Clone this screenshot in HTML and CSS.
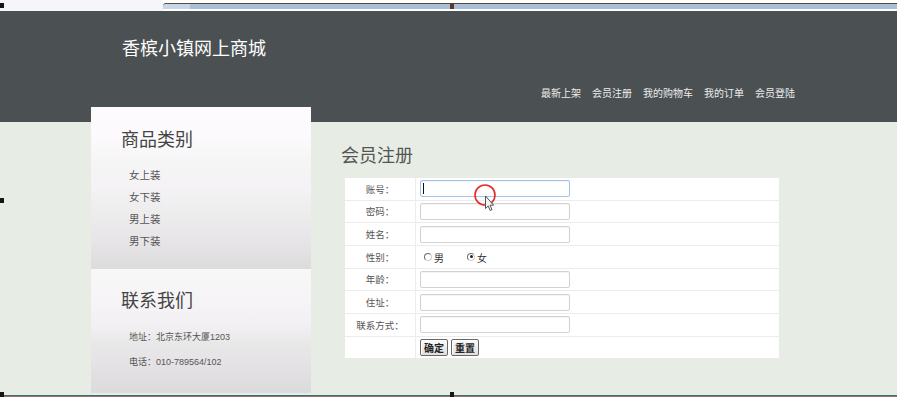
FILE: index.html
```html
<!DOCTYPE html>
<html lang="zh-CN">
<head>
<meta charset="utf-8">
<title>香槟小镇网上商城 - 会员注册</title>
<link rel="stylesheet" href="styles.css">
</head>
<body>
<div class="topbar"><div class="tb-left"></div><div class="tb-right"><div class="tb-thumb"></div></div></div>
<header class="header">
  <div class="wrap">
    <h1 class="logo">香槟小镇网上商城</h1>
    <nav class="nav">
      <a>最新上架</a><a>会员注册</a><a>我的购物车</a><a>我的订单</a><a>会员登陆</a>
    </nav>
  </div>
</header>
<div class="content">
  <div class="wrap row">
    <aside class="sidebar">
      <section class="panel cat">
        <h2 class="ph">商品类别</h2>
        <ul class="list">
          <li>女上装</li><li>女下装</li><li>男上装</li><li>男下装</li>
        </ul>
      </section>
      <section class="panel contact">
        <h2 class="ph">联系我们</h2>
        <div class="info">
          <p>地址：北京东环大厦1203</p>
          <p>电话：010-789564/102</p>
        </div>
      </section>
    </aside>
    <main class="main">
      <h2 class="title">会员注册</h2>
      <div class="form">
        <div class="lab">账号：</div><div class="val"><span class="field focus"><input class="inp" type="text"><span class="caret"></span></span></div>
        <div class="lab">密码：</div><div class="val"><input class="inp" type="password"></div>
        <div class="lab">姓名：</div><div class="val"><input class="inp" type="text"></div>
        <div class="lab">性别：</div><div class="val"><span class="radio"></span><span class="rtxt">男</span><span class="radio on"></span><span class="rtxt">女</span></div>
        <div class="lab">年龄：</div><div class="val"><input class="inp" type="text"></div>
        <div class="lab">住址：</div><div class="val"><input class="inp" type="text"></div>
        <div class="lab">联系方式：</div><div class="val"><input class="inp" type="text"></div>
        <div class="lab"></div><div class="val"><span class="btn">确定</span><span class="btn">重置</span></div>
      </div>
    </main>
  </div>
</div>
<div class="bottomline"></div>

<span class="handle h1"></span><span class="handle h2"></span><span class="handle h3"></span><span class="handle h4"></span><span class="handle h5"></span>

<svg class="cursor" width="24" height="36" viewBox="0 0 24 36">
  <circle cx="11" cy="11" r="10" fill="none" stroke="#e8282a" stroke-width="1.6"/>
  <path d="M11.5 12 L11.5 24.5 L14.2 22 L16.2 26.5 L18 25.7 L16 21.2 L19.6 21.2 Z" fill="#f4f4f4" stroke="#444" stroke-width="0.9" stroke-linejoin="round"/>
</svg>
</body>
</html>
```
FILE: styles.css
```css
html, body {
  margin: 0;
  padding: 0;
}
body {
  width: 897px;
  height: 405px;
  overflow: hidden;
  position: relative;
  background: #ffffff;
  font-family: "Liberation Sans", "Noto Sans CJK SC", sans-serif;
}

/* top strip (screenshot chrome) */
.topbar {
  display: flex;
  height: 11px;
}
.tb-left {
  width: 163px;
  background: #f5f5fa;
}
.tb-right {
  flex: 1;
  margin-top: 3px;
  height: 5px;
  border-top: 1px solid #5b4b3d;
  border-bottom: 2px solid #ffffff;
  background: #a8bfd9;
  border-top-left-radius: 3px;
}
.tb-thumb {
  width: 27px;
  height: 100%;
  background: #c7d6e8;
  border-top-left-radius: 3px;
}

/* header */
.header {
  height: 111px;
  background: #4b5153;
}
.wrap {
  width: 715px;
  margin: 0 auto;
}
.logo {
  margin: 0;
  padding: 28px 0 0 31px;
  font-size: 18px;
  line-height: 20px;
  font-weight: normal;
  color: #ffffff;
}
.nav {
  display: flex;
  justify-content: flex-end;
  gap: 11px;
  padding-right: 11px;
  margin-top: 28px;
  font-size: 10px;
  line-height: 14px;
  color: #ececec;
}

/* content */
.content {
  display: flow-root;
  height: 273px;
  background: #e7ede5;
}
.row {
  display: flex;
  gap: 30px;
  margin-top: -15px;
}
.sidebar {
  width: 220px;
  flex: none;
}
.panel {
  box-sizing: border-box;
  padding-left: 30px;
}
.cat {
  height: 162px;
  padding-top: 21px;
  background: linear-gradient(#fefbfe 0%, #fcfafc 18%, #f6f5f6 35%, #f4f2f4 50%, #eeedee 65%, #e7e5e7 82%, #dddcdd 100%);
}
.contact {
  height: 124px;
  padding-top: 20px;
  background: linear-gradient(#f8f8f8 0%, #f6f4f6 25%, #f2f0f2 45%, #e9e8e9 60%, #e5e3e5 75%, #dcdbdc 100%);
}
.ph {
  margin: 0;
  font-size: 18px;
  line-height: 24px;
  font-weight: normal;
  color: #444444;
}
.list {
  list-style: none;
  margin: 12px 0 0;
  padding: 0 0 0 8px;
  font-size: 10.5px;
  line-height: 22px;
  color: #555555;
}
.info {
  margin: 12px 0 0 8px;
  font-size: 9px;
  line-height: 25px;
  color: #555555;
}
.info p {
  margin: 0;
}

/* main */
.main {
  flex: 1;
}
.title {
  margin: 37px 0 0;
  font-size: 18px;
  line-height: 24px;
  font-weight: normal;
  color: #555555;
}
.form {
  margin: 10px 0 0 4px;
  width: 434px;
  display: grid;
  grid-template-columns: 70px 1fr;
  grid-auto-rows: 21.66px;
  gap: 1px;
  background: #ececec;
}
.lab, .val {
  background: #ffffff;
  display: flex;
  align-items: center;
}
.lab {
  justify-content: center;
  font-size: 9.5px;
  color: #555555;
}
.val {
  padding-left: 4px;
}
.field {
  position: relative;
  display: block;
  width: 150px;
  height: 17px;
}
.inp {
  display: block;
  box-sizing: border-box;
  width: 150px;
  height: 17px;
  margin: 0;
  padding: 0;
  border: 1px solid #d2d2d2;
  border-radius: 2px;
  background: #ffffff;
  box-shadow: inset 0 1px 1px rgba(0, 0, 0, 0.05);
  outline: none;
}
.focus .inp {
  border-color: #9fc4e8;
}
.caret {
  position: absolute;
  left: 3px;
  top: 3px;
  width: 1px;
  height: 11px;
  background: #111111;
}
.radio {
  box-sizing: border-box;
  width: 8px;
  height: 8px;
  margin-left: 4px;
  border: 1px solid;
  border-color: #6e6e6e #cfcfcf #cfcfcf #6e6e6e;
  border-radius: 50%;
  background: #ffffff;
  position: relative;
}
.radio.on::after {
  content: "";
  position: absolute;
  left: 1.5px;
  top: 1.5px;
  width: 3px;
  height: 3px;
  border-radius: 50%;
  background: #222222;
}
.rtxt {
  font-size: 10px;
  color: #333333;
  margin: 2px 19px 0 2px;
}
.btn {
  box-sizing: border-box;
  width: 28px;
  height: 17px;
  margin-right: 3px;
  display: flex;
  align-items: center;
  justify-content: center;
  border: 1px solid #686868;
  border-radius: 2px;
  background: linear-gradient(#fbfbfb, #e0e0e0);
  box-shadow: inset 1px 1px 0 #ffffff;
  font-size: 10px;
  font-weight: bold;
  color: #222222;
}

/* bottom */
.bottomline {
  height: 1px;
  background: #3c6c80;
  border-bottom: 1px solid #9a7060;
}

/* overlays */
.handle {
  position: absolute;
  width: 4px;
  height: 5px;
  background: #1a1414;
}
.h1 { left: 0; top: 3px; }
.h2 { left: 450px; top: 3px; height: 6px; background: #5a3a24; }
.h3 { left: 0; top: 198px; }
.h4 { left: 0; top: 392px; }
.h5 { left: 450px; top: 392px; }
.cursor {
  position: absolute;
  left: 474px;
  top: 184px;
}
```
